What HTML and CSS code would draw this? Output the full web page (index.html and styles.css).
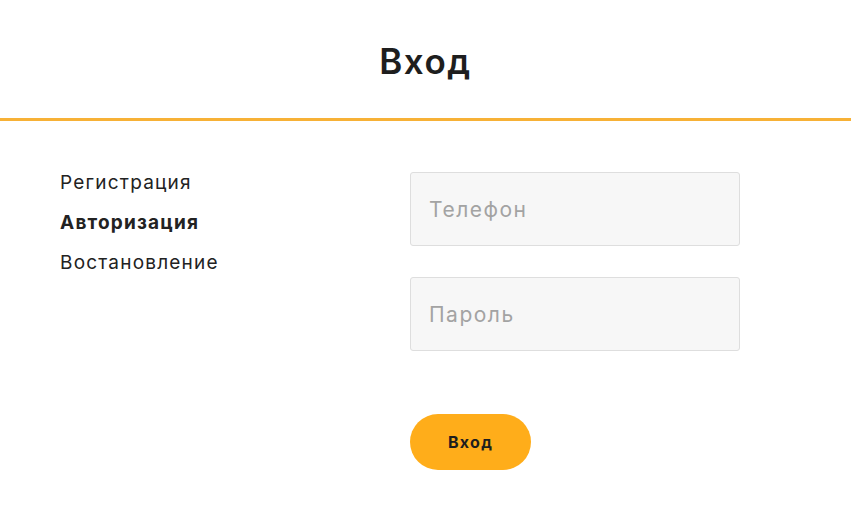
FILE: index.html
```html
<!DOCTYPE html>
<html lang="ru">
<head>
  <meta charset="UTF-8">
  <meta name="viewport" content="width=device-width, initial-scale=1.0">
  <title>Вход</title>
  <link rel="stylesheet" href="styles.css">
</head>
<body>
  <header class="page-header">
    <h1>Вход</h1>
  </header>

  <main class="auth">
    <nav class="auth-nav">
      <a href="#">Регистрация</a>
      <a href="#" class="active">Авторизация</a>
      <a href="#">Востановление</a>
    </nav>

    <form class="auth-form">
      <input type="text" class="field" placeholder="Телефон">
      <input type="password" class="field" placeholder="Пароль">
      <button type="submit" class="btn">Вход</button>
    </form>
  </main>
</body>
</html>
```

FILE: styles.css
```css
body {
  margin: 0;
  font-family: 'Inter', sans-serif;
  background-color: #fff;
  color: #222;
}
.page-header {
  height: 118px;
  border-bottom: 3px solid #f7b136;
  display: flex;
  align-items: center;
  justify-content: center;
}
.page-header h1 {
  margin: 0;
  font-size: 35px;
  font-weight: 600;
  letter-spacing: 1.5px;
  color: #1e1e1e;
  padding-top: 4px;
}
.auth {
  display: flex;
  padding: 51px 0 0 60px;
}
.auth-nav {
  width: 350px;
  display: flex;
  flex-direction: column;
  gap: 18px;
}
.auth-nav a {
  font-size: 19px;
  line-height: 22px;
  letter-spacing: 1.2px;
  color: #222;
  text-decoration: none;
}
.auth-nav a.active {
  font-weight: 700;
}
.auth-form {
  display: flex;
  flex-direction: column;
  align-items: flex-start;
}
.field {
  box-sizing: border-box;
  width: 330px;
  height: 74px;
  margin-bottom: 31px;
  padding: 0 18px;
  background-color: #f7f7f7;
  border: 1px solid #dedede;
  border-radius: 3px;
  font-family: 'Inter', sans-serif;
  font-size: 21px;
  letter-spacing: 1.5px;
  color: #222;
  outline: none;
}
.field::placeholder {
  color: #a3a3a3;
}
.btn {
  margin-top: 32px;
  width: 121px;
  height: 56px;
  border: none;
  border-radius: 28px;
  background-color: #ffad1a;
  color: #1e1e1e;
  font-family: 'Inter', sans-serif;
  font-size: 16px;
  font-weight: 700;
  letter-spacing: 1.3px;
  cursor: pointer;
}
```
